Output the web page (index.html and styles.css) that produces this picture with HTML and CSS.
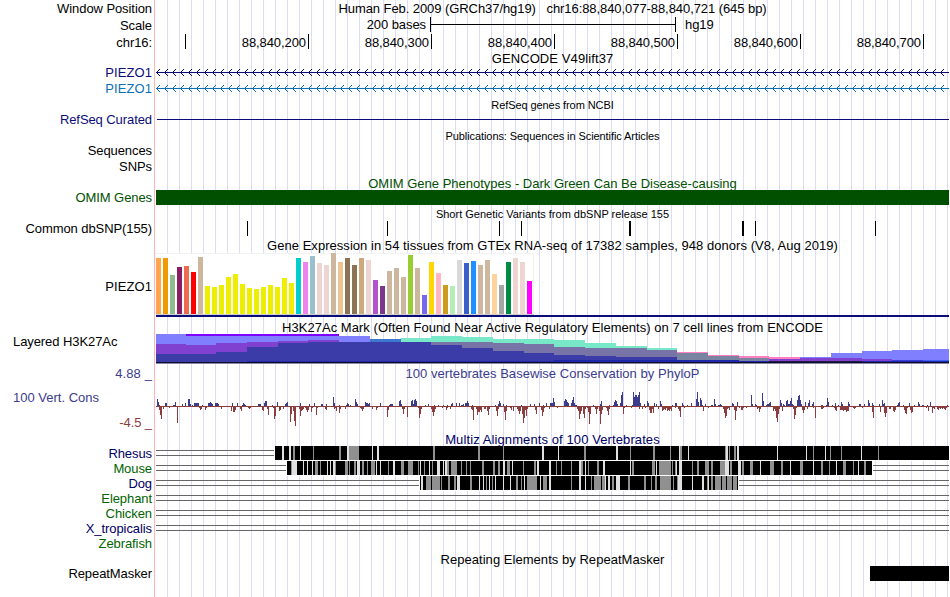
FILE: index.html
```html
<!DOCTYPE html>
<html lang="en">
<head>
    <meta charset="UTF-8">
    <title>Human chr16:88,840,077-88,840,721</title>
    <link rel="stylesheet" href="styles.css">
</head>
<body>
<div class="browser">
    <div class="row h17"><div class="label">Window Position</div><div class="title pos">Human Feb. 2009 (GRCh37/hg19) &nbsp; chr16:88,840,077-88,840,721 (645 bp)</div></div>
    <div class="row h17"><div class="label">Scale</div><svg id="scale" viewBox="156 0 793 17"></svg></div>
    <div class="row h17"><div class="label">chr16:</div><svg id="ruler" viewBox="156 0 793 17"></svg></div>

    <div class="row h13"><div class="label"></div><div class="title wide">GENCODE V49lift37</div></div>
    <div class="row h16"><div class="label wide navy">PIEZO1</div><svg class="gene navy" viewBox="156 0 793 16"></svg></div>
    <div class="row h16"><div class="label wide blue">PIEZO1</div><svg class="gene blue" viewBox="156 0 793 16"></svg></div>

    <div class="row h17"><div class="label"></div><div class="title small">RefSeq genes from NCBI</div></div>
    <div class="row h12"><div class="label navy">RefSeq Curated</div><svg id="refseq" viewBox="156 0 793 12"></svg></div>

    <div class="row h18"><div class="label"></div><div class="title small low">Publications: Sequences in Scientific Articles</div></div>
    <div class="row h16"><div class="label raised">Sequences</div></div>
    <div class="row h16"><div class="label raised">SNPs</div></div>

    <div class="row h15"><div class="label"></div><div class="title green omim">OMIM Gene Phenotypes - Dark Green Can Be Disease-causing</div></div>
    <div class="row h15"><div class="label green">OMIM Genes</div><div class="omimbar"></div></div>

    <div class="row h16"><div class="label"></div><div class="title small variants">Short Genetic Variants from dbSNP release 155</div></div>
    <div class="row h15"><div class="label">Common dbSNP(155)</div><svg id="snp" viewBox="156 0 793 15"></svg></div>

    <div class="row h17"><div class="label"></div><div class="title">Gene Expression in 54 tissues from GTEx RNA-seq of 17382 samples, 948 donors (V8, Aug 2019)</div></div>
    <div class="row h65"><div class="label wide lowered">PIEZO1</div><svg id="gtex" viewBox="156 253 793 65"></svg></div>

    <div class="row h16"><div class="label"></div><div class="title">H3K27Ac Mark (Often Found Near Active Regulatory Elements) on 7 cell lines from ENCODE</div></div>
    <div class="row h30"><div class="label left up">Layered H3K27Ac</div><svg id="h3k" viewBox="156 334 793 30"></svg></div>

    <div class="row h18"><div class="label wide slate">4.88 _</div><div class="title phylop slate">100 vertebrates Basewise Conservation by PhyloP</div></div>
    <div class="row h48">
        <div class="label stack"><span class="slate cons">100 Vert. Cons</span><span class="brown">-4.5 _</span></div>
        <svg id="cons" viewBox="156 382 793 48"></svg>
    </div>

    <div class="row h16"><div class="label"></div><div class="title wide midnight">Multiz Alignments of 100 Vertebrates</div></div>
    <div class="row h15"><div class="label midnight">Rhesus</div><svg id="rhesus" viewBox="156 0 793 15"></svg></div>
    <div class="row h15"><div class="label forest">Mouse</div><svg id="mouse" viewBox="156 0 793 15"></svg></div>
    <div class="row h15"><div class="label midnight">Dog</div><svg id="dog" viewBox="156 0 793 15"></svg></div>
    <div class="row h15"><div class="label forest">Elephant</div><div class="gap"></div></div>
    <div class="row h15"><div class="label forest">Chicken</div><div class="gap"></div></div>
    <div class="row h15"><div class="label midnight">X_tropicalis</div><div class="gap"></div></div>
    <div class="row h15"><div class="label forest">Zebrafish</div></div>

    <div class="row h15"><div class="label"></div><div class="title">Repeating Elements by RepeatMasker</div></div>
    <div class="row h15"><div class="label">RepeatMasker</div><svg id="repeat" viewBox="156 0 793 15"></svg></div>
</div>
<script src="tracks.js"></script>
</body>
</html>
```
FILE: styles.css
```css
body{margin: 0;background: #fff;font: 13px "Liberation Sans",Arial,sans-serif;color: #000;}

/* red edge of the label column and the 12px guide lines */
.browser{width: 949px;height: 597px;overflow: hidden;
background: linear-gradient(#ffb4b4,#ffb4b4) 154px 0/1px 100% no-repeat,
repeating-linear-gradient(90deg,#dcdcf5 0,#dcdcf5 1px,transparent 1px,transparent 12px) 167px 0/782px 100% no-repeat;}

.row{display: flex;align-items: center;}
.row svg{width: 793px;height: 100%;display: block;shape-rendering: crispEdges;flex: none;}
.label{box-sizing: border-box;width: 156px;padding-right: 4px;text-align: right;white-space: nowrap;flex: none;line-height: 15px;letter-spacing: -.08px;}
.label.left{text-align: left;padding-left: 13px;}
.label.up{padding-bottom: 15px;}
.label.raised{padding-bottom: 2px;}
.label.lowered{padding-top: 2px;}
.stack{display: flex;flex-direction: column;justify-content: space-between;height: 48px;padding-top: 8px;}
.stack .cons{text-align: left;padding-left: 13px;letter-spacing: 0;}
.title{width: 793px;text-align: center;white-space: nowrap;line-height: 15px;letter-spacing: .04px;padding-top: 2px;}
.title.pos{letter-spacing: -.07px;padding-top: 0;}
.title.omim{letter-spacing: 0;}
.title.phylop{padding-top: 0;}
.label.wide,.title.wide{letter-spacing: .1px;}
.title.small{font-size: 11px;letter-spacing: -.08px;}
.title.variants{letter-spacing: 0;}
.title.low{padding-top: 5px;}

.h12{height: 12px;}
.h13{height: 13px;}
.h15{height: 15px;}
.h16{height: 16px;}
.h17{height: 17px;}
.h18{height: 18px;}
.h30{height: 30px;}
.h48{height: 48px;}
.h65{height: 65px;}

.navy{color: #0c0c78;}
.blue{color: #0c70b4;}
.green{color: #005000;}
.slate{color: #3c3c8c;}
.brown{color: #8c3c3c;}
.midnight{color: #000064;}
.forest{color: #006400;}

.omimbar{width: 793px;height: 15px;background: #005000;}
.gap{box-sizing: border-box;width: 793px;height: 6px;margin-bottom: 1px;border-top: 1px solid #666;border-bottom: 1px solid #666;}
svg text{font: 13px "Liberation Sans",Arial,sans-serif;letter-spacing: -.08px;}
```
FILE: tracks.js
```js
function byId(id) { return document.getElementById(id); }
function rect(x, y, w, h, c) {
    return '<rect x="' + x + '" y="' + y + '" width="' + w + '" height="' + h + '" fill="' + c + '"/>';
}
function text(x, y, s, anchor) {
    return '<text x="' + x + '" y="' + y + '" text-anchor="' + anchor + '">' + s + '</text>';
}

// scale bar and ruler
byId('scale').innerHTML = rect(430, 0, 1, 15, '#000') + rect(675, 0, 1, 15, '#000') + rect(430, 7, 246, 1, '#000') +
    text(426, 12, '200 bases', 'end') + text(685, 12, 'hg19', 'start');
var out = rect(185, 0, 1, 15, '#000');
for (var i = 0; i < 6; i++) {
    out += rect(308 + i * 123, 0, 1, 15, '#000') + text(306 + i * 123, 13, '88,840,' + (i + 2) + '00', 'end');
}
byId('ruler').innerHTML = out;

// genes with strand arrows
var genes = document.querySelectorAll('.gene');
for (var g = 0; g < genes.length; g++) {
    out = rect(156, 8, 793, 1, 'currentColor');
    for (var x = 157; x < 949; x += 8) {
        for (var k = 1; k < 4; k++) {
            out += rect(x + k - 1, 8 - k, 1, 1, 'currentColor') + rect(x + k - 1, 8 + k, 1, 1, 'currentColor');
        }
    }
    genes[g].innerHTML = out;
}
byId('refseq').innerHTML = rect(157, 6, 792, 1, '#0c0c78');

// dbSNP
byId('snp').innerHTML = [[247, 1], [387, 1], [499, 1], [521, 1], [629, 2], [742, 2], [755, 1], [875, 1]].map(function (s) {
    return rect(s[0], 0, s[1], 15, '#000');
}).join('');

// GTEx bars: height, colour
var gtex = [[56,'#ffa54f'],[56,'#ee9a00'],[39,'#8fbc8f'],[47,'#8b1c62'],[48,'#ee6a50'],[42,'#ff0000'],[57,'#cdb79e'],
    [28],[27],[29],[37],[40],[30],[26],[25],[27],[29],[27],[36],[31],
    [56,'#00cdcd'],[52,'#ee82ee'],[58,'#9ac0cd'],[51,'#eed5d2'],[49,'#eed5d2'],[61,'#cdb79e'],[52,'#eec591'],[56,'#8b7355'],
    [49,'#8b7355'],[56,'#cdaa7d'],[54,'#eed5d2'],[34,'#b452cd'],[28,'#7a378b'],[43,'#cdb79e'],[46,'#cdb79e'],[37,'#cdb79e'],
    [59,'#9acd32'],[46,'#cdb79e'],[19,'#7a67ee'],[52,'#ffd700'],[41,'#ffb6c1'],[29,'#cd9b1d'],[28,'#b4eeb4'],[54,'#d9d9d9'],
    [51,'#3a5fcd'],[53,'#1e90ff'],[49,'#cdb79e'],[54,'#cdb79e'],[40,'#ffd39b'],[29,'#a6a6a6'],[52,'#008b45'],[56,'#eed5d2'],
    [52,'#eed5d2'],[33,'#ff00ff']];
out = rect(156, 253, 378, 62, '#f2f2f2') + rect(156, 254, 377, 60, '#fff') + rect(156, 314, 378, 1, '#d0d0d0');
gtex.forEach(function (b, i) {
    out += rect(156 + i * 7, 314 - b[0], 5, b[0], b[1] || '#eeee00');
});
byId('gtex').innerHTML = out + rect(156, 315, 793, 2, '#0c0c78');

// H3K27Ac: left edge, then top/colour pairs going down
var V = '#8000ff', L = '#8080ff', P = '#8040d0', D = '#3c3ca8', T = '#78e8c8', G = '#7874a8', K = '#ff80c0', S = '#7884a0', B = '#1e28a8';
var h3k = [
    [156,334,L,344,P,354,D], [186,334,V,336,L,345,P,354,D], [216,334,V,336,L,343,P,352,D], [247,334,V,336,L,342,P,347,D,361,B],
    [278,334,V,336,L,341,P,343,D,361,B], [308,334,V,336,L,340,P,342,D,361,B], [339,336,L,342,D,361,B], [370,339,'#3c78d0',342,D,361,B],
    [401,338,T,342,D,361,B], [431,336,T,342,G,345,D,361,B], [462,337,T,342,G,348,D,361,B], [493,339,T,343,G,351,D,361,B],
    [524,339,T,344,G,353,D,361,B], [554,340,T,347,G,355,D,360,B], [585,343,T,348,G,356,D,360,B], [616,346,T,348,G,357,D,360,B],
    [647,348,T,350,G,357,D,360,B], [677,352,K,353,S,360,B], [708,355,K,356,S,360,B], [739,356,K,358,S,361,B],
    [769,357,K,359,P,361,'#201c40'], [800,357,L,358,P,361,'#201c40'], [831,353,L,358,P,361,'#201c40'], [862,351,L,359,P,361,B],
    [892,350,L,360,'#3c3cd8',361,B], [923,349,L,360,'#3c64f0',361,B], [949]];
out = '';
for (i = 0; i < h3k.length - 1; i++) {
    for (k = 1; k < h3k[i].length; k += 2) {
        out += rect(h3k[i][0], h3k[i][k], h3k[i + 1][0] - h3k[i][0], 363 - h3k[i][k], h3k[i][k + 1]);
    }
}
byId('h3k').innerHTML = out + rect(156, 362, 793, 1, '#100c30') + rect(156, 363, 793, 1, '#8888a0');

// PhyloP: each run is a start x and its heights
var up = '157 7 4 1|165 3 3|173 1 1 4|182 2|185 3|188 7 7 2|192 1|194 3 3 3 3 3|202 1|208 3 3 4 3 2|215 3 3 3 2|232 3|237 3|242 1 3 2 1|258 2 2 2|264 3 5 5|272 1|277 4|285 2 3 4|300 3|309 2|314 3|321 2 2|326 2|333 9 3|339 1|346 1 3 2|350 1|355 7 4 2|365 4 3 3 2 3|380 3|389 1 2 2 2|399 5 6 2|411 5 6 2 6 7 5|425 1|428 2|434 1|438 1|443 1|447 1|451 2 3|456 3|459 3|461 1 1 2|465 3 3 5 3|472 1|495 1|498 2 5 3|503 2|506 1|521 1|530 2|534 2|539 3|543 1|546 3|550 3 3 3 8 4|564 5 7 6 4 3|571 3 6 9 3 1 1|593 1|600 2 5|609 1|613 1 4 6 5 2|620 3 11 14|626 1|632 1 14 9 11 11 9 11 14 3|644 2|647 5 3|654 3|656 2|660 5 2|672 1|675 3 3|682 3 1|687 1|691 3|696 7 14 4|700 8 6 1|705 2|711 1 1|714 7 2|718 1 1 2 1|732 3 2|737 4|751 11 2|755 2 1|762 13 5|766 1 2 2|769 3 4|780 6 3|783 2 1|786 5 6 2|789 2 5 8 2 1|797 6 10 11 6 2|805 4|808 3 6|812 2 4|821 1 1|826 1 8 4|832 1|835 3|838 1|841 4 2|848 4 2|859 2 2|864 2|868 6 3|872 3 1|879 2|882 6 2|884 3|897 1 3 4|903 1|909 3|914 1|918 4 2|922 1 1|927 1|930 4|947 1';
var down = '159 4 9 13 1 3|169 2 1|177 17|199 2 4 3|205 4 2|221 3 1|231 5 1 6 6 4|239 1 3 5|247 1 2 3 2|262 4 5|267 3 9|273 2 13 10|279 5 4|283 3|290 16 8|292 1 5 15 20|299 3 10 5 4 3|305 2 4 6 4|311 6 2|316 9 2|325 3 4|334 3 2 5|339 7 3|345 3|360 2 3 5 3|372 3|376 4 2|382 1|387 11 4|402 3 8 3|407 11|418 2 12 8 3|431 3 6 10 6 3|442 2 1|446 4 2|450 3|471 3 4 14|476 3 9 6 6 4 6|484 3 3|487 5 9 3|496 5 10 3|504 6 14 5|510 2 4 1 5|517 3 5 8 5|522 8 17 12 4 10 3|535 4 8|541 4 10 6 2|549 3|557 2|577 3 5 13 8 5|583 8 12 3|587 2 6 18 8|595 3 8 3|599 5 18 8 4|606 2 5 9 3|623 8 2|631 2|639 3|642 3|645 2|649 4 7 7 3|653 7|658 3|662 5 4 3|665 4 2 5 4|669 5 3 5|675 2|678 3 5 11|684 2|703 5|708 2|723 3 7 12 10 3|728 2 4|734 4 14 5|739 2|741 4 4 2|745 1 2 1|757 3 2 6 3|773 5 3 5|776 12 16 8 3|782 5|793 3 13 9 2|802 4 7 4|807 3|813 2 1|815 12|821 3 3 2|834 2 4 5|840 4 4 4 5 4 4 6 5 5|853 2 3 2|862 2|872 6 12|880 6|884 7 11 7|889 3 3|893 5 6 4|904 4 7 8 2|910 4 7 6|920 1|926 2|928 5|932 7 2 3|937 3 4 2 3 2 3 2 3 4 2';
function bars(runs, dir, c) {
    var s = '';
    runs.split('|').forEach(function (r) {
        var v = r.split(' ').map(Number);
        for (var j = 1; j < v.length; j++) {
            s += rect(v[0] + j - 1, dir < 0 ? 406 - v[j] : 406, 1, v[j], c);
        }
    });
    return s;
}
byId('cons').innerHTML = rect(156, 406, 793, 1, '#8c3c3c') + bars(up, -1, '#3c3c8c') + bars(down, 1, '#8c3c3c');

// alignments: light and grey cuts in a black block, "x w" each
function align(id, start, end, light, grey) {
    var s = rect(156, 4, 793, 1, '#666') + rect(156, 9, 793, 1, '#666') +
        rect(start - 1, 0, end - start + 2, 15, '#fff') + rect(start, 0, end - start, 14, '#000');
    [[light, '#e0e0e0'], [grey, '#909090']].forEach(function (p) {
        p[0].split(',').forEach(function (t) {
            var v = t.split(' ');
            s += rect(v[0], 0, v[1] || 1, 14, p[1]);
        });
    });
    byId(id).innerHTML = s;
}
align('rhesus', 275, 949,
    '282 2,289 2,300,347 2,372,377 2,542 2,558,616 2,679,688,726 2,737 2,777,806,825,861',
    '293 2,313,339 2,349 10,433 2,478 2,503,584 2,630,653 2,670,680 2,725,729,734 2,813,830,841,878');
align('mouse', 287, 872,
    '292 5,303,307,312,327,330,333 2,357 3,376,380,388,393 2,420,429,437 3,443,445 2,503 2,512,537 2,549 2,579 2,585,603 2,630,656,676,679 3,725 4,738 3,760,790,813,836,858',
    '291,315 3,320,335,345 3,349,354 2,362 2,367,371 4,388,401 3,408 5,418,424,432,447 2,451 6,461,466,470,482 2,493 2,498 2,507 3,523,534 2,556,561,571,581 2,588,597 2,632 2,652 3,659 12,672,675,692,697 2,705 4,711 2,720 5,730 2,742 2,750 3,770 4,781 2,800 3,821 2,829,843 3,853,864 2');
align('dog', 420, 738,
    '421 2,457 3,479,483,489,495,503,510,524,528 3,540,549 2,579 2,585,600,605,608 2,616 4,644,678 4,692,702 2,708,736',
    '426 5,432 8,441,448 2,454 2,470 2,486,492,516 2,521,527 10,543 4,571,591,594 7,602 3,612 2,628 2,644 2,651,655 2,660 11,673,677,707,711 2,715 6,722 4,727 5,733 4');
byId('repeat').innerHTML = rect(870, 0, 79, 15, '#000');
```
